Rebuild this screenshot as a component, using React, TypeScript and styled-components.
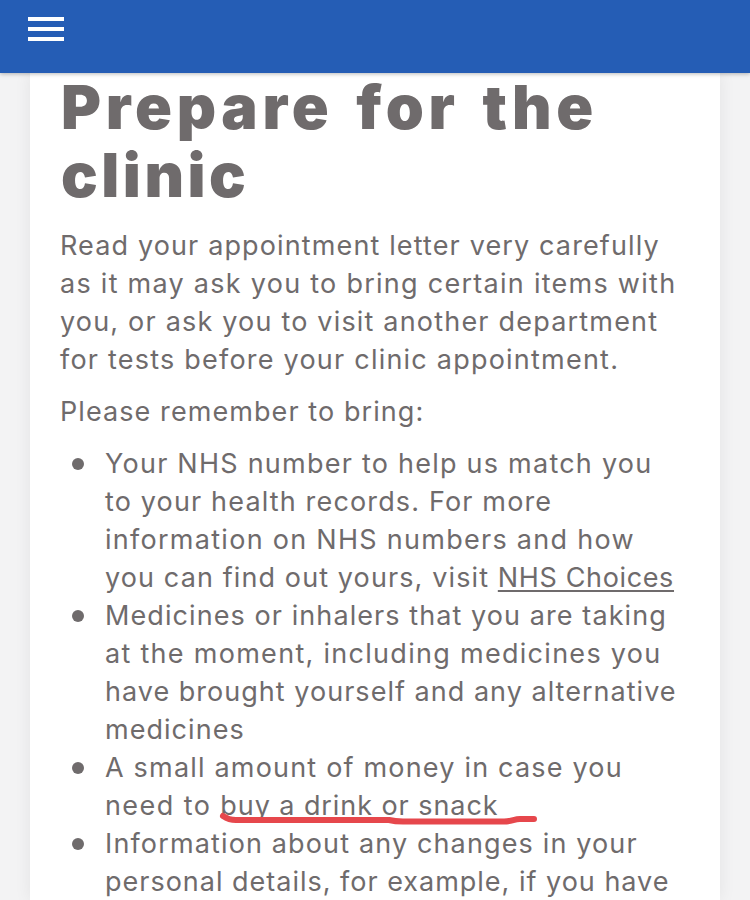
import React from "react";
import styled, { createGlobalStyle } from "styled-components";

const Global = createGlobalStyle`
  * { box-sizing: border-box; }
  html, body { margin: 0; background: #f3f3f4; }
`;
const Page = styled.div`
  width: 750px;
  height: 900px;
  overflow: hidden;
  display: flex;
  flex-direction: column;
  background: #f3f3f4;
  font-family: Inter, "Liberation Sans", sans-serif;
  color: #6f6b6c;
`;
const TopBar = styled.header`
  height: 73px;
  flex: none;
  background: #255db5;
  padding: 17px 28px;
  box-shadow: 0 1px 4px rgba(0, 0, 0, 0.28);
  position: relative;
  z-index: 1;
`;
const MenuButton = styled.button`
  display: flex;
  flex-direction: column;
  gap: 6px;
  width: 36px;
  padding: 0;
  border: 0;
  background: none;
`;
const MenuBar = styled.span`
  width: 36px;
  height: 4px;
  background: #fff;
`;
const Card = styled.main`
  flex: none;
  height: 827px;
  margin: 0 30px;
  padding: 0 30px;
  background: #fff;
  box-shadow: 0 0 16px rgba(0, 0, 0, 0.07);
`;
const Title = styled.h1`
  margin: 0;
  padding-left: 1px;
  height: 154px;
  font-size: 61px;
  font-weight: 900;
  line-height: 68px;
`;
const TitleLine = styled.span<{ $spacing: number; $word?: number }>`
  display: block;
  white-space: nowrap;
  letter-spacing: ${p => p.$spacing}px;
  word-spacing: ${p => p.$word ?? 0}px;
`;
const Line = styled.span<{ $spacing: number }>`
  display: block;
  height: 38px;
  white-space: nowrap;
  font-size: 27px;
  line-height: 38px;
  letter-spacing: ${p => p.$spacing}px;
`;
const Paragraph = styled.p`
  margin: 0 0 14px;
`;
const List = styled.ul`
  margin: 0;
  padding: 0;
  list-style: none;
`;
const Item = styled.li`
  display: grid;
  grid-template-columns: 45px 1fr;
`;
const Bullet = styled.span`
  width: 12px;
  height: 12px;
  margin: 13px 0 0 12px;
  border-radius: 50%;
  background: #6f6b6c;
`;
const Link = styled.a`
  color: inherit;
  letter-spacing: 0.64px;
  text-decoration: underline;
  text-decoration-thickness: 2px;
  text-underline-offset: 3px;
  text-decoration-skip-ink: none;
`;
const Marked = styled.span`
  position: relative;
  letter-spacing: 0.93px;
`;
const Stroke = styled.svg`
  position: absolute;
  left: -1px;
  top: 23px;
  width: 320px;
  height: 16px;
  overflow: visible;
`;

type TextLine = [React.ReactNode, number];

const intro: TextLine[] = [
  ["Read your appointment letter very carefully", 1.13],
  ["as it may ask you to bring certain items with", 1.27],
  ["you, or ask you to visit another department", 1.19],
  ["for tests before your clinic appointment.", 1.22],
];

const items: TextLine[][] = [
  [
    ["Your NHS number to help us match you", 1.24],
    ["to your health records. For more", 1.15],
    ["information on NHS numbers and how", 1.28],
    [<>you can find out yours, visit <Link>NHS Choices</Link></>, 1.11],
  ],
  [
    ["Medicines or inhalers that you are taking", 1.08],
    ["at the moment, including medicines you", 1.29],
    ["have brought yourself and any alternative", 1.02],
    ["medicines", 1.04],
  ],
  [
    ["A small amount of money in case you", 1.19],
    [
      <>
        need to{" "}
        <Marked>
          buy a drink or snack
          <Stroke viewBox="0 0 320 16" aria-hidden="true">
            <path
              d="M4 4Q10 8 17 8L170 8Q176 9.5 184 9.5L285 9.5C293 9.5 295 7 301 7L315 7"
              fill="none"
              stroke="#e6474c"
              strokeWidth="6"
              strokeLinecap="round"
              strokeLinejoin="round"
            />
          </Stroke>
        </Marked>
      </>,
      1.42,
    ],
  ],
  [
    ["Information about any changes in your", 1.14],
    ["personal details, for example, if you have", 0.99],
  ],
];

const Lines = ({ lines }: { lines: TextLine[] }) => (
  <>{lines.map(([text, spacing], i) => <Line key={i} $spacing={spacing}>{text}</Line>)}</>
);

export default function App() {
  return (
    <Page>
      <Global />
      <TopBar>
        <MenuButton aria-label="Open menu"><MenuBar /><MenuBar /><MenuBar /></MenuButton>
      </TopBar>
      <Card>
        <Title>
          <TitleLine $spacing={4.7} $word={6}>Prepare for the</TitleLine>
          <TitleLine $spacing={3.5}>clinic</TitleLine>
        </Title>
        <Paragraph><Lines lines={intro} /></Paragraph>
        <Paragraph><Line $spacing={1.08}>Please remember to bring:</Line></Paragraph>
        <List>
          {items.map((lines, i) => (
            <Item key={i}><Bullet /><div><Lines lines={lines} /></div></Item>
          ))}
        </List>
      </Card>
    </Page>
  );
}
